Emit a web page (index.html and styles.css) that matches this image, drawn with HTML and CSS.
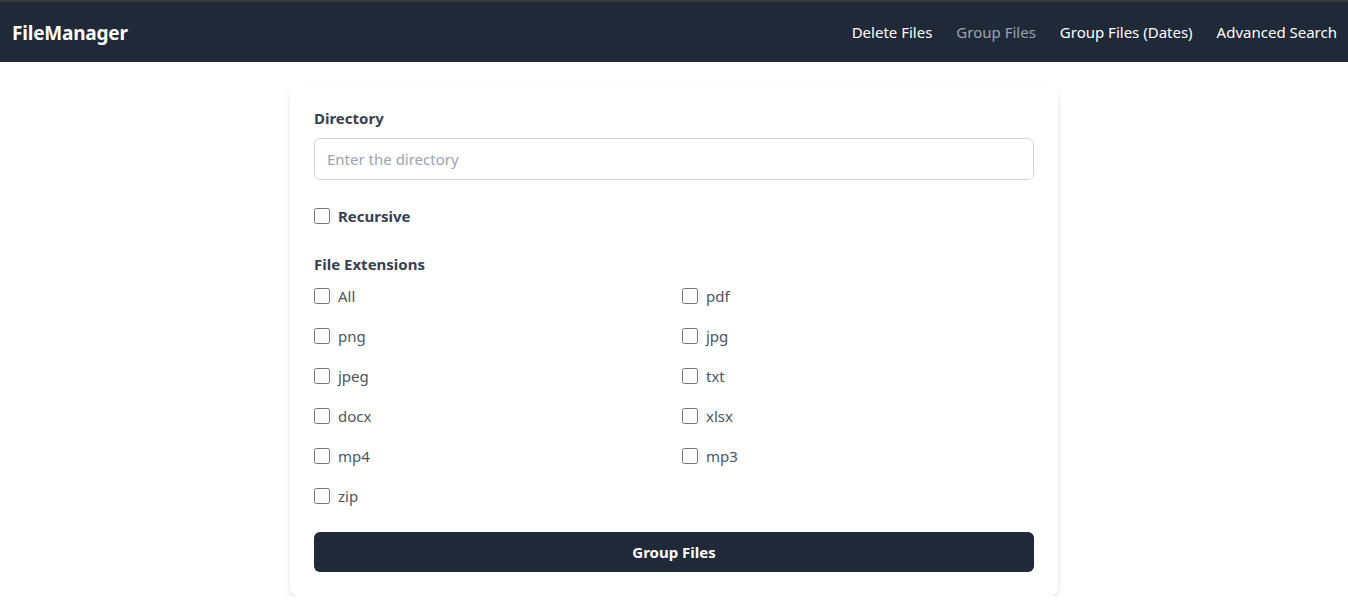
FILE: index.html
```html
<!DOCTYPE html>
<html lang="en">
<head>
<meta charset="utf-8">
<title>FileManager</title>
<link rel="stylesheet" href="styles.css">
</head>
<body>
<div class="topline"></div>
<nav class="navbar">
  <a class="brand" href="#">FileManager</a>
  <div class="links">
    <a href="#">Delete Files</a>
    <a href="#" class="active">Group Files</a>
    <a href="#">Group Files (Dates)</a>
    <a href="#">Advanced Search</a>
  </div>
</nav>
<main class="main">
  <form class="card">
    <label class="field-label" for="dir">Directory</label>
    <input class="text-input" id="dir" type="text" placeholder="Enter the directory">
    <label class="check recursive"><input type="checkbox"><span>Recursive</span></label>
    <div class="field-label ext-title">File Extensions</div>
    <div class="ext-grid">
      <label class="check"><input type="checkbox"><span>All</span></label>
      <label class="check"><input type="checkbox"><span>pdf</span></label>
      <label class="check"><input type="checkbox"><span>png</span></label>
      <label class="check"><input type="checkbox"><span>jpg</span></label>
      <label class="check"><input type="checkbox"><span>jpeg</span></label>
      <label class="check"><input type="checkbox"><span>txt</span></label>
      <label class="check"><input type="checkbox"><span>docx</span></label>
      <label class="check"><input type="checkbox"><span>xlsx</span></label>
      <label class="check"><input type="checkbox"><span>mp4</span></label>
      <label class="check"><input type="checkbox"><span>mp3</span></label>
      <label class="check"><input type="checkbox"><span>zip</span></label>
    </div>
    <button class="submit" type="button">Group Files</button>
  </form>
</main>
</body>
</html>
```
FILE: styles.css
```css
* { box-sizing: border-box; }
html, body { margin: 0; padding: 0; }
body {
  font-family: "Noto Sans", "Open Sans", sans-serif;
  background: #ffffff;
  color: #374151;
}
.topline { height: 2px; background: #3a3b3d; }
.navbar {
  height: 60px;
  background: #1f2937;
  display: flex;
  align-items: center;
  justify-content: space-between;
  padding: 0 11px 0 12px;
}
.brand {
  color: #ffffff;
  font-weight: 700;
  font-size: 19px;
  line-height: 26px;
  padding-top: 2px;
  text-decoration: none;
  letter-spacing: -0.2px;
}
.links { display: flex; gap: 24px; }
.links a {
  color: #ffffff;
  text-decoration: none;
  font-size: 15px;
}
.links a.active { color: #9ca3af; }
.main {
  display: flex;
  justify-content: center;
  padding-top: 24px;
}
.card {
  width: 768px;
  background: #fff;
  border-radius: 8px;
  box-shadow: 0 4px 8px -1px rgba(0,0,0,0.12), 0 2px 4px -2px rgba(0,0,0,0.1);
  padding: 22px 24px 24px;
  display: flex;
  flex-direction: column;
}
.field-label {
  font-weight: 700;
  font-size: 15px;
  line-height: 20px;
  color: #374151;
  margin-bottom: 10px;
}
.text-input {
  height: 42px;
  border: 1px solid #d1d5db;
  border-radius: 6px;
  padding: 0 12px;
  font-family: inherit;
  font-size: 15px;
  color: #374151;
  outline: none;
}
.text-input::placeholder { color: #9ca3af; }
.check {
  display: flex;
  align-items: center;
  gap: 8px;
  font-size: 15px;
  line-height: 20px;
  color: #4b5563;
  height: 20px;
}
.check input {
  width: 16px;
  height: 16px;
  margin: 0;
  accent-color: #1f2937;
}
.recursive { margin-top: 26px; font-weight: 700; color: #374151; }
.ext-title { margin-top: 28px; margin-bottom: 12px; }
.ext-grid {
  display: grid;
  grid-template-columns: 1fr 1fr;
  column-gap: 16px;
  row-gap: 20px;
}
.submit {
  margin-top: 26px;
  height: 40px;
  border: none;
  border-radius: 6px;
  background: #1f2937;
  color: #fff;
  font-family: inherit;
  font-weight: 700;
  font-size: 15px;
  cursor: pointer;
}
```
